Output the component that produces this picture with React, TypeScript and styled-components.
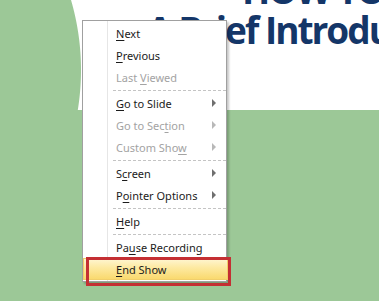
import React from "react";
import styled, { createGlobalStyle } from "styled-components";

const GlobalStyle = createGlobalStyle`
  html, body {
    margin: 0;
    padding: 0;
    width: 379px;
    height: 301px;
    overflow: hidden;
  }
`;

const Page = styled.div`
  position: relative;
  width: 379px;
  height: 301px;
  overflow: hidden;
  background: #9cc897;
`;

const SlideBand = styled.div`
  height: 110px;
  overflow: hidden;
  background: radial-gradient(
    circle 250px at -169px 70px,
    #9cc897 249.5px,
    #ffffff 250.5px
  );
`;

const TitleLine = styled.div<{ $indent: number; $offset: number }>`
  margin-top: ${(p) => p.$offset}px;
  padding-left: ${(p) => p.$indent}px;
  font-family: "Open Sans", "Liberation Sans", sans-serif;
  font-weight: 700;
  font-size: 37px;
  line-height: 37px;
  letter-spacing: -2px;
  color: #143668;
  white-space: nowrap;
`;

const Menu = styled.div`
  position: absolute;
  left: 82px;
  top: 20px;
  width: 143px;
  padding: 1px 0;
  background: #ffffff;
  border: 1px solid #a0a0a0;
  box-shadow: 2px 2px 2px rgba(0, 0, 0, 0.22);
  font-family: "Noto Sans", "Open Sans", sans-serif;
  font-size: 11px;

  &::before {
    content: "";
    position: absolute;
    left: 24px;
    top: 0;
    bottom: 0;
    width: 1px;
    background: #e6e6e6;
  }
`;

const Row = styled.div<{ $disabled?: boolean; $active?: boolean }>`
  position: relative;
  display: flex;
  align-items: center;
  justify-content: space-between;
  height: 22px;
  padding: 0 10px 0 33px;
  color: ${(p) => (p.$disabled ? "#a3a3a3" : "#1b1b1b")};
  white-space: nowrap;
  ${(p) =>
    p.$active &&
    `
    margin-right: -2px;
    background: linear-gradient(#fff7d6 0%, #fde9a0 45%, #f9d86a 100%);
    box-shadow: inset 0 0 0 1px #f1cf6b;
  `}
`;

const Key = styled.span`
  text-decoration: underline;
  text-underline-offset: 2px;
`;

const Arrow = styled.span<{ $disabled?: boolean }>`
  width: 0;
  height: 0;
  border-top: 4px solid transparent;
  border-bottom: 4px solid transparent;
  border-left: 4px solid ${(p) => (p.$disabled ? "#b8b8b8" : "#6f6f6f")};
`;

const Separator = styled.div`
  height: 4px;
  display: flex;
  align-items: center;
  margin-left: 30px;

  &::after {
    content: "";
    flex: 1;
    border-top: 1px dashed #c4c4c4;
  }
`;

const Callout = styled.div`
  position: absolute;
  left: 3px;
  top: -1px;
  width: 139px;
  height: 23px;
  border: 3px solid #c42f33;
  pointer-events: none;
`;

type Item =
  | { sep: true }
  | {
      sep?: false;
      pre: string;
      key: string;
      post: string;
      disabled?: boolean;
      sub?: boolean;
      active?: boolean;
    };

const items: Item[] = [
  { pre: "", key: "N", post: "ext" },
  { pre: "", key: "P", post: "revious" },
  { pre: "Last ", key: "V", post: "iewed", disabled: true },
  { sep: true },
  { pre: "", key: "G", post: "o to Slide", sub: true },
  { pre: "Go to Sec", key: "t", post: "ion", disabled: true, sub: true },
  { pre: "Custom Sho", key: "w", post: "", disabled: true, sub: true },
  { sep: true },
  { pre: "S", key: "c", post: "reen", sub: true },
  { pre: "P", key: "o", post: "inter Options", sub: true },
  { sep: true },
  { pre: "", key: "H", post: "elp" },
  { sep: true },
  { pre: "Pa", key: "u", post: "se Recording" },
  { pre: "", key: "E", post: "nd Show", active: true },
];

export default function App() {
  return (
    <Page>
      <GlobalStyle />
      <SlideBand>
        <TitleLine $indent={242} $offset={-29}>
          HOW TO
        </TitleLine>
        <TitleLine $indent={147} $offset={3}>
          A Brief Introduction
        </TitleLine>
      </SlideBand>
      <Menu>
        {items.map((it, i) =>
          it.sep ? (
            <Separator key={i} />
          ) : (
            <Row key={i} $disabled={it.disabled} $active={it.active}>
              <span>
                {it.pre}
                <Key>{it.key}</Key>
                {it.post}
              </span>
              {it.sub && <Arrow $disabled={it.disabled} />}
              {it.active && <Callout />}
            </Row>
          )
        )}
      </Menu>
    </Page>
  );
}
